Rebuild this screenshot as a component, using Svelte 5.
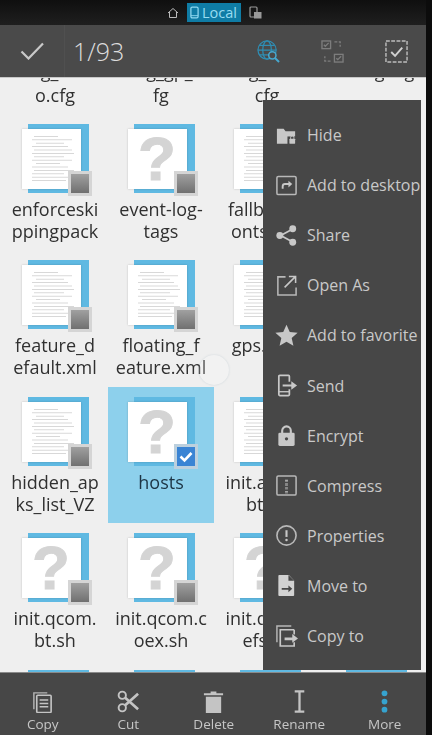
<script>
  const files = [
    ['diag_audi', 'o.cfg', 'text'],
    ['diag_gp_c', 'fg', 'text'],
    ['diag_wlan.', 'cfg', 'text'],
    ['debug.log', '', 'text'],
    ['enforceski', 'ppingpack', 'text'],
    ['event-log-', 'tags', 'unknown'],
    ['fallback_f', 'onts.xml', 'text'],
    ['', '', 'text'],
    ['feature_d', 'efault.xml', 'text'],
    ['floating_f', 'eature.xml', 'text'],
    ['gps.conf', '', 'text'],
    ['', '', 'text'],
    ['hidden_ap', 'ks_list_VZ', 'text'],
    ['hosts', '', 'unknown', true],
    ['init.ath3k.', 'bt.sh', 'text'],
    ['', '', 'text'],
    ['init.qcom.', 'bt.sh', 'unknown'],
    ['init.qcom.c', 'oex.sh', 'unknown'],
    ['init.qcom.', 'efs.sh', 'unknown'],
    ['', '', 'unknown'],
    ['', '', 'text'],
    ['', '', 'text'],
    ['', '', 'text'],
    ['', '', 'text']
  ];

  const textLines = [
    [12, 24], [10, 40], [14, 28], [10, 36], [12, 38], [10, 42], [12, 30], [10, 40],
    [14, 24], [10, 36], [12, 40], [10, 32], [10, 38], [10, 34]
  ];

  const menu = [
    ['Hide', '<path d="M2 5h7l2 2.5h10v13H2z" fill="#c8c8c8"/><rect x="13" y="13" width="10" height="9" fill="#474747"/><rect x="15" y="15.5" width="6" height="5" rx=".5" fill="#c8c8c8"/><path d="M16.3 15.5v-1.5a1.7 1.7 0 0 1 3.4 0v1.5" fill="none" stroke="#c8c8c8"/>'],
    ['Add to desktop', '<rect x="2" y="2.5" width="20" height="19" rx="1.5" fill="none" stroke="#b8b8b8" stroke-width="1.6"/><path d="M8 15.5v-2.5a2.5 2.5 0 0 1 2.5-2.5H15" fill="none" stroke="#c8c8c8" stroke-width="2"/><path d="M14 7l4 3.5-4 3.5z" fill="#c8c8c8"/>'],
    ['Share', '<path d="M18 5.5 6 12l12 6.5" fill="none" stroke="#c8c8c8" stroke-width="1.8"/><circle cx="18.5" cy="5" r="3.6" fill="#c8c8c8"/><circle cx="5" cy="12" r="3.6" fill="#c8c8c8"/><circle cx="18.5" cy="19" r="3.6" fill="#c8c8c8"/>'],
    ['Open As', '<path d="M11 3H3v19h19v-8" fill="none" stroke="#b8b8b8" stroke-width="1.6"/><path d="M10 14 21 3M14.5 2.5h7v7" fill="none" stroke="#c8c8c8" stroke-width="1.6"/>'],
    ['Add to favorite', '<path d="M12 .8l3.4 7.6 8.2.8-6.2 5.5 1.8 8.1-7.2-4.2-7.2 4.2 1.8-8.1L.4 9.2l8.2-.8z" fill="#c8c8c8"/>'],
    ['Send', '<path d="M15 8V2.5a1 1 0 0 0-1-1H5a1 1 0 0 0-1 1v19a1 1 0 0 0 1 1h9a1 1 0 0 0 1-1V16" fill="none" stroke="#c8c8c8" stroke-width="1.8"/><path d="M4 18.5h11" stroke="#c8c8c8" stroke-width="1.4"/><path d="M8 11h9V7.5l6 4.5-6 4.5V13H8z" fill="#c8c8c8"/>'],
    ['Encrypt', '<rect x="3.5" y="9" width="17" height="14" rx="1.5" fill="#c8c8c8"/><path d="M7.5 9.5V7a4.5 4.5 0 0 1 9 0v2.5" fill="none" stroke="#c8c8c8" stroke-width="2.2"/><circle cx="12" cy="15.5" r="1.7" fill="#474747"/>'],
    ['Compress', '<rect x="2" y="2" width="20" height="20" rx="1.5" fill="none" stroke="#b8b8b8" stroke-width="1.6"/><path d="M12 6v2M12 10v2M12 14v2M12 18v2" stroke="#c8c8c8" stroke-width="3" stroke-dasharray="1 .6"/>'],
    ['Properties', '<circle cx="12" cy="12" r="10" fill="none" stroke="#b8b8b8" stroke-width="1.7"/><path d="M12 6.5v7" stroke="#c8c8c8" stroke-width="2.2"/><circle cx="12" cy="16.8" r="1.3" fill="#c8c8c8"/>'],
    ['Move to', '<path d="M4.5 1h10l5.5 6v15a1 1 0 0 1-1 1H4.5a1 1 0 0 1-1-1V2a1 1 0 0 1 1-1z" fill="#d2d2d2"/><path d="M14 1v6h6" fill="#474747"/><path d="M7 14.5h7v-2.500l4 3.500-4 3.500v-2.500H7z" fill="#474747"/>'],
    ['Copy to', '<path d="M17 2H2v17" fill="none" stroke="#b8b8b8" stroke-width="1.5"/><path d="M20 6H5.500v17H20v-4M20 6v5" fill="none" stroke="#c8c8c8" stroke-width="1.7"/><path d="M10 14h8v-3.500l6 4.500-6 4.500V17h-8z" fill="#c8c8c8"/>']
  ];

  const actions = [
    ['Copy', '<path d="M3 20V3h14" fill="none" stroke="#b5b5b5" stroke-width="1.500"/><rect x="6" y="5.500" width="15" height="18" rx="1" fill="none" stroke="#c4c4c4" stroke-width="1.700"/><path d="M9 10.500h9M9 14h9M9 17.500h9" stroke="#c4c4c4" stroke-width="1.500"/>'],
    ['Cut', '<circle cx="5.500" cy="5.500" r="3.800" fill="none" stroke="#c4c4c4" stroke-width="2"/><circle cx="5.500" cy="18.500" r="3.800" fill="none" stroke="#c4c4c4" stroke-width="2"/><path d="M8.500 8 22 20M8.500 16 22 4" stroke="#c4c4c4" stroke-width="2.800"/>'],
    ['Delete', '<path d="M4 7h16v17H4z" fill="#c4c4c4"/><path d="M2 3.500h20v2H2zM9 1.500h6v2H9z" fill="#c4c4c4"/>'],
    ['Rename', '<path d="M7 1.500h10M7 22.500h10M12 1.500v21" fill="none" stroke="#c4c4c4" stroke-width="2.400"/>'],
    ['More', '<circle cx="12" cy="3.500" r="3" fill="#36a3cf"/><circle cx="12" cy="12" r="3" fill="#36a3cf"/><circle cx="12" cy="20.500" r="3" fill="#36a3cf"/>']
  ];
</script>

<div class="screen">
  <header class="status">
    <svg class="home" viewBox="0 0 12 12"><path d="M1 6 6 1.500 11 6M2.500 5v5.500h7V5" fill="none" stroke="#bbb" stroke-width="1"/></svg>
    <span class="local">
      <svg viewBox="0 0 10 14"><rect x="1" y="1" width="8" height="12" rx="1.500" fill="none" stroke="#8fd8f0" stroke-width="1.400"/><path d="M1 10.500h8" stroke="#8fd8f0"/></svg>
      Local
    </span>
    <svg class="remote" viewBox="0 0 13 13"><rect x="1" y="1" width="7" height="10" rx="1" fill="none" stroke="#999" stroke-width="1.200"/><rect x="5" y="6" width="7.500" height="6.500" fill="#999"/></svg>
  </header>

  <div class="toolbar">
    <button class="confirm" aria-label="Done">
      <svg viewBox="0 0 24 18"><path d="M1.500 9.500 8.500 16.500 23 1.500" fill="none" stroke="#c9c9c9" stroke-width="2.200"/></svg>
    </button>
    <span class="count">1/93</span>
    <div class="tools">
      <svg viewBox="0 0 24 24">
        <g fill="none" stroke="#2f8db3" stroke-width="1.300">
          <circle cx="10.500" cy="10.500" r="9.500" />
          <ellipse cx="10.500" cy="10.500" rx="4.500" ry="9.500" />
          <path d="M1 10.500h19M2.500 5.500h16M2.500 15.500h16" />
        </g>
        <circle cx="16" cy="16" r="3.800" fill="#4a4a4a" stroke="#46a9d0" stroke-width="1.600" />
        <path d="M18.500 18.500 23 23" stroke="#46a9d0" stroke-width="2" />
      </svg>
      <svg viewBox="0 0 24 24">
        <g fill="none" stroke="#7d7d7d" stroke-width="1.400">
          <rect x="1" y="1" width="9" height="8" />
          <rect x="14" y="15" width="9" height="8" />
          <path d="M14 2h6v5M10 22H4v-5" stroke-dasharray="3 1.500" />
          <path d="M3 5l1.500 1.500L8 3M16 19l1.500 1.500L21 17" />
        </g>
      </svg>
      <svg viewBox="0 0 24 24">
        <rect x="1" y="1" width="22" height="22" fill="none" stroke="#bdbdbd" stroke-width="1.500" stroke-dasharray="4 1.500" />
        <path d="M6.500 12.500 10.500 16.500 18 8" fill="none" stroke="#d0d0d0" stroke-width="2" />
      </svg>
    </div>
  </div>

  <main class="browser">
    <div class="grid">
      {#each files as [first, second, kind, selected]}
        <div class="cell" class:selected>
          <div class="icon">
            <div class="back"></div>
            <div class="page">
              {#if kind === 'unknown'}
                <span class="mark">?</span>
              {:else}
                <svg viewBox="0 0 59 60">
                  {#each textLines as [x, w], i}
                    <rect {x} y={7 + i * 3.400} width={w} height="0.8" fill="#cfcfcf" />
                  {/each}
                </svg>
              {/if}
            </div>
            {#if selected}
              <div class="badge checked">
                <svg viewBox="0 0 18 18"><path d="M3.500 9 7.500 13 14.500 5.500" fill="none" stroke="#fff" stroke-width="2.600" /></svg>
              </div>
            {:else}
              <div class="badge"></div>
            {/if}
          </div>
          <div class="name">{first}<br />{second}</div>
        </div>
      {/each}
    </div>

    <div class="touch"></div>

    <nav class="menu">
      {#each menu as [label, icon]}
        <div class="menu-item">
          <svg viewBox="0 0 24 24">{@html icon}</svg>
          <span>{label}</span>
        </div>
      {/each}
    </nav>
  </main>

  <footer class="actions">
    {#each actions as [label, icon]}
      <div class="action">
        <svg viewBox="0 0 24 24">{@html icon}</svg>
        <span>{label}</span>
      </div>
    {/each}
  </footer>
</div>

<style>
  :global(body) {
    background: #0c0c0c;
  }

  .screen {
    width: 426px;
    height: 735px;
    display: flex;
    flex-direction: column;
    overflow: hidden;
    font-family: "Open Sans", "Noto Sans", sans-serif;
    filter: blur(0.45px);
  }

  .status {
    height: 25px;
    flex: none;
    display: flex;
    align-items: center;
    justify-content: center;
    gap: 8px;
    padding-left: 2px;
    background: linear-gradient(#0f0f0f, #1f1f1f);
  }

  .home {
    width: 12px;
    height: 12px;
  }

  .remote {
    width: 13px;
    height: 13px;
  }

  .local {
    height: 19px;
    width: 54px;
    display: flex;
    align-items: center;
    justify-content: center;
    gap: 3px;
    background: #0f7ca5;
    color: #97dcf2;
    font-size: 14.5px;
  }

  .local svg {
    width: 9px;
    height: 13px;
  }

  .toolbar {
    height: 52px;
    flex: none;
    display: flex;
    align-items: center;
    background: #4a4a4a;
  }

  .confirm {
    width: 65px;
    height: 100%;
    padding: 0;
    display: flex;
    align-items: center;
    justify-content: center;
    background: none;
    border: 0;
    border-right: 1px solid #505050;
  }

  .confirm svg {
    width: 24px;
    height: 18px;
  }

  .count {
    margin-left: 8px;
    font-size: 25px;
    color: #dcdcdc;
    font-weight: 300;
  }

  .tools {
    margin-left: auto;
    margin-right: 18px;
    display: flex;
    gap: 41px;
  }

  .tools svg {
    width: 23px;
    height: 23px;
  }

  .browser {
    flex: 1;
    position: relative;
    overflow: hidden;
    background: #efefef;
    border-top: 1px solid #c8c8c8;
  }

  .grid {
    display: grid;
    grid-template-columns: repeat(4, 106px);
    grid-auto-rows: 136.4px;
    margin: -100.4px 0 0 2px;
  }

  .cell {
    padding-top: 10px;
    display: flex;
    flex-direction: column;
    align-items: center;
  }

  .cell.selected {
    background: #8dd0ec;
  }

  .icon {
    position: relative;
    width: 70px;
    height: 73px;
    flex: none;
    margin-left: 3px;
  }

  .back {
    position: absolute;
    left: 6px;
    top: 0;
    width: 61px;
    height: 69px;
    background: #5fb9e2;
  }

  .page {
    position: absolute;
    left: 0;
    top: 5px;
    width: 59px;
    height: 60px;
    display: flex;
    align-items: center;
    justify-content: center;
    background: #fff;
    box-shadow: 0 0 2px rgba(0, 0, 0, 0.2);
  }

  .page svg {
    width: 100%;
    height: 100%;
  }

  .mark {
    font-family: "Liberation Sans", sans-serif;
    font-weight: 700;
    font-size: 62px;
    line-height: 1;
    color: #d4d4d4;
    -webkit-text-stroke: 1px #d4d4d4;
  }

  .badge {
    position: absolute;
    left: 46px;
    top: 47px;
    width: 24px;
    height: 25px;
    box-sizing: border-box;
    border: 3px solid #d5d5d5;
    background: linear-gradient(#a0a0a0, #707070);
  }

  .badge.checked {
    border-color: #bcd0de;
    background: #3a84d4;
  }

  .badge svg {
    display: block;
    width: 100%;
    height: 100%;
  }

  .name {
    margin-top: 1px;
    font-size: 18px;
    line-height: 22px;
    text-align: center;
    white-space: nowrap;
    color: #303030;
  }

  /* first row is scrolled under the toolbar, only descenders of line one show */
  .cell:nth-child(-n + 4) .name {
    margin-top: -2px;
    line-height: 24px;
  }

  .selected .name {
    color: #1c3444;
  }

  .touch {
    position: absolute;
    left: 199px;
    top: 277px;
    width: 30px;
    height: 30px;
    border-radius: 50%;
    background: rgba(255, 255, 255, 0.2);
    box-shadow: 0 0 2px rgba(120, 150, 170, 0.3);
  }

  .menu {
    position: absolute;
    left: 263px;
    top: 22px;
    width: 158px;
    height: 570px;
    box-sizing: border-box;
    padding-top: 10px;
    background: #474747;
  }

  .menu-item {
    height: 50.1px;
    display: flex;
    align-items: center;
    gap: 9px;
    padding-left: 12px;
    font-size: 16px;
    color: #c9c9c9;
    white-space: nowrap;
  }

  .menu-item svg {
    width: 23px;
    height: 23px;
    flex: none;
  }

  .actions {
    height: 63px;
    flex: none;
    display: grid;
    grid-template-columns: repeat(5, 85.5px);
    background: #474747;
    border-top: 1px solid #8a8a8a;
    box-sizing: border-box;
  }

  .action {
    display: flex;
    flex-direction: column;
    align-items: center;
    padding-top: 17px;
    font-size: 13.5px;
    color: #c6c6c6;
  }

  .action svg {
    width: 23px;
    height: 23px;
    flex: none;
  }

  .action span {
    margin-top: 1px;
    line-height: 20px;
  }
</style>
